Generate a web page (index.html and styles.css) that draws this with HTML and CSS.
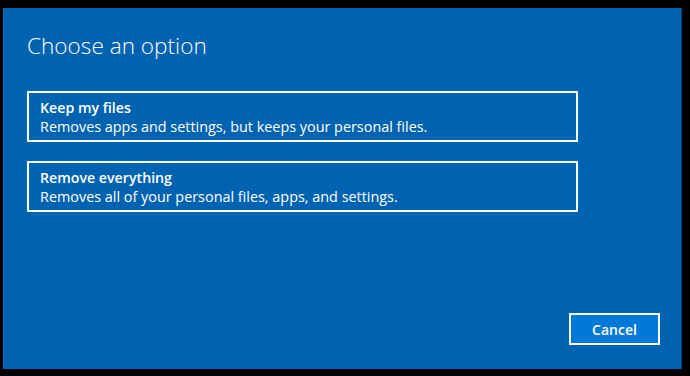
FILE: index.html
```html
<!DOCTYPE html>
<html lang="en">
<head>
  <meta charset="UTF-8" />
  <meta name="viewport" content="width=device-width, initial-scale=1.0"/>
  <title>Choose an option</title>
  <link rel="stylesheet" href="styles.css">
</head>
<body>
  <div class="dialog">
    <h1 class="title">Choose an option</h1>

    <div class="options">
      <button class="option">
        <span class="option-name">Keep my files</span>
        <span class="option-desc">Removes apps and settings, but keeps your personal files.</span>
      </button>

      <button class="option">
        <span class="option-name">Remove everything</span>
        <span class="option-desc">Removes all of your personal files, apps, and settings.</span>
      </button>
    </div>

    <div class="footer">
      <button class="cancel-btn">Cancel</button>
    </div>
  </div>
</body>
</html>
```

FILE: styles.css
```css
body {
  margin: 0;
  background-color: #000;
  font-family: "Open Sans", "Noto Sans", sans-serif;
  color: #fff;
  height: 100vh;
}

.dialog {
  margin: 8px 0 0 3px;
  width: 679px;
  height: 361px;
  background-color: #0063b1;
  border-right: 1px solid #003e70;
  display: flex;
  flex-direction: column;
  padding: 0 0 0 24px;
  box-sizing: border-box;
}

.title {
  margin: 22px 0 0 0;
  font-size: 22.6px;
  font-weight: 300;
  line-height: 32px;
}

.options {
  display: flex;
  flex-direction: column;
  gap: 19px;
  margin-top: 29px;
}

.option {
  width: 551px;
  height: 51px;
  border: 2px solid #fff;
  background: transparent;
  color: #fff;
  font-family: inherit;
  text-align: left;
  padding: 5px 11px 0 11px;
  display: flex;
  flex-direction: column;
  box-sizing: border-box;
}

.option-name {
  font-size: 14.2px;
  font-weight: 600;
  line-height: 19px;
}

.option-desc {
  font-size: 14.4px;
  line-height: 20px;
}

.footer {
  margin-top: auto;
  margin-bottom: 24px;
  display: flex;
  justify-content: flex-end;
  padding-right: 21px;
}

.cancel-btn {
  width: 91px;
  height: 32px;
  border: 2px solid #fff;
  background-color: #0078d7;
  color: #fff;
  font-family: inherit;
  font-size: 14px;
  font-weight: 600;
}
```
